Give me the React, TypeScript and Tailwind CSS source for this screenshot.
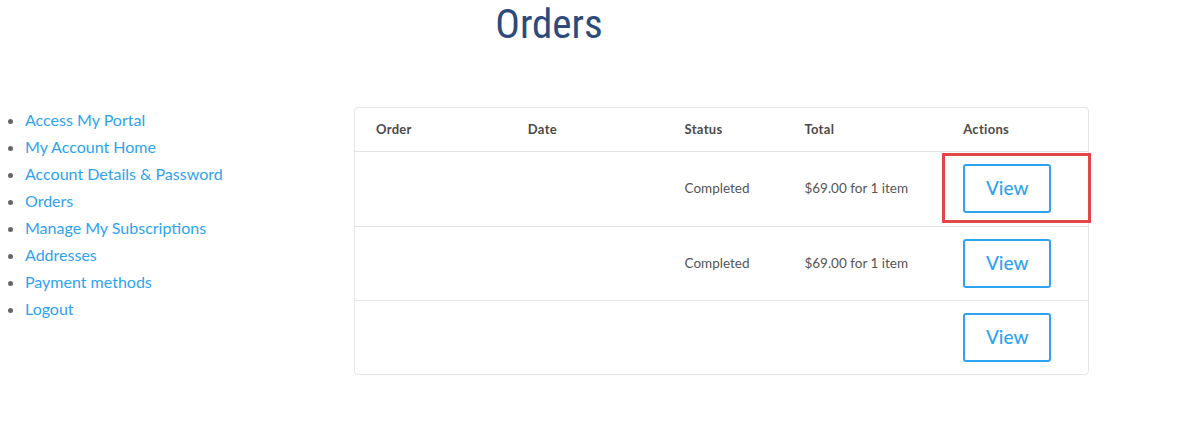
import React from "react";

const links = [
  "Access My Portal",
  "My Account Home",
  "Account Details & Password",
  "Orders",
  "Manage My Subscriptions",
  "Addresses",
  "Payment methods",
  "Logout",
];

const rows = [
  { status: "Completed", total: "$69.00 for 1 item", highlight: true, h: "h-[75px]" },
  { status: "Completed", total: "$69.00 for 1 item", highlight: false, h: "h-[74px]" },
  { status: "", total: "", highlight: false, h: "h-[73px]" },
];

export default function App() {
  return (
    <div className="w-[1196px] h-[441px] bg-white overflow-hidden" style={{ fontFamily: "Lato, 'Noto Sans', sans-serif" }}>
      <div className="w-[1098px] h-[107px] text-center">
        <h1
          className="text-[41px] leading-[46px] pt-[1px] text-[#2d4a7b] inline-block"
          style={{ fontFamily: "'Liberation Sans Narrow', 'Roboto Condensed', 'Liberation Sans', sans-serif", fontStretch: "condensed" }}
        >
          Orders
        </h1>
      </div>
      <div className="flex">
        <ul className="w-[354px] shrink-0 -mt-[1px] list-disc pl-[25px] text-[16px] leading-[27px] text-[#2ea3f2] marker:text-[#666]">
          {links.map((l) => (
            <li key={l}>{l}</li>
          ))}
        </ul>
        <div className="w-[735px] border border-[#e5e5e5] rounded-[4px]">
          <div className="flex h-[44px] items-center text-[13px] font-bold tracking-[0.3px] text-[#4a4a4a] border-b border-[#e5e5e5]">
            <div className="w-[152px] pl-[21px]">Order</div>
            <div className="w-[157px] pl-[21px]">Date</div>
            <div className="w-[120px] pl-[21px]">Status</div>
            <div className="w-[158px] pl-[21px]">Total</div>
            <div className="w-[147px] pl-[22px]">Actions</div>
          </div>
          {rows.map((r, i) => (
            <div
              key={i}
              className={`flex ${r.h} items-center text-[13.5px] text-[#555] ${i < rows.length - 1 ? "border-b border-[#e5e5e5]" : ""}`}
            >
              <div className="w-[152px] pl-[21px]"></div>
              <div className="w-[157px] pl-[21px]"></div>
              <div className="w-[120px] pl-[21px] -mt-[1px]">{r.status}</div>
              <div className="w-[158px] pl-[21px] -mt-[1px]">{r.total}</div>
              <div className="w-[147px] pl-[22px] relative -mt-[1px]">
                <button className="w-[88px] h-[49px] border-2 border-[#2ea3f2] rounded-[3px] text-[19px] font-medium text-[#2ea3f2] bg-white">
                  View
                </button>
                {r.highlight && (
                  <div className="absolute left-[1px] top-[-11px] w-[149px] h-[70px] border-[3px] border-[#e34646] pointer-events-none" />
                )}
              </div>
            </div>
          ))}
        </div>
      </div>
    </div>
  );
}
